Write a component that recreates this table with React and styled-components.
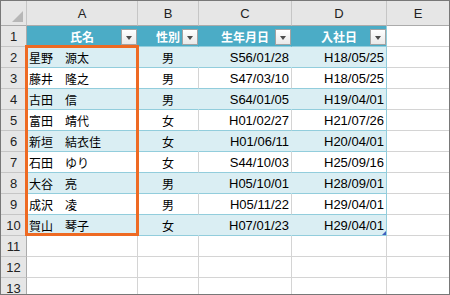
import React from "react";
import styled, { createGlobalStyle } from "styled-components";

const Global = createGlobalStyle`
  html, body { margin: 0; padding: 0; background: #fff; }
  body { font-family: "Liberation Sans", "Noto Sans CJK JP", sans-serif; }
`;

const Sheet = styled.div`
  position: relative;
  box-sizing: border-box;
  width: 450px;
  height: 295px;
  border: 1px solid #787878;
  overflow: hidden;
  display: grid;
  grid-template-columns: 26px 111px 61px 93px 95px 62px;
  grid-template-rows: 25px;
  grid-auto-rows: 21px;
  background: #fff;
`;

const BaseCell = styled.div`
  box-sizing: border-box;
  position: relative;
  display: flex;
  align-items: center;
  overflow: hidden;
  white-space: nowrap;
  font-size: 13px;
  color: #000;
`;

const Corner = styled(BaseCell)`
  background: #e6e6e6;
  border-right: 1px solid #c6c6c6;
  border-bottom: 1px solid #ababab;
`;

const CornerMark = styled.div`
  position: absolute;
  left: 11px;
  top: 10px;
  width: 0;
  height: 0;
  border-left: 11px solid transparent;
  border-bottom: 11px solid #b7b7b7;
`;

const ColHeader = styled(BaseCell)`
  background: #e6e6e6;
  justify-content: center;
  color: #222;
  border-right: ${(p) => (p.$last ? "none" : "1px solid #c6c6c6")};
  border-bottom: 1px solid #ababab;
`;

const RowHeader = styled(BaseCell)`
  background: #e6e6e6;
  justify-content: center;
  color: #222;
  border-right: 1px solid #ababab;
  border-bottom: 1px solid #c6c6c6;
`;

const TableHead = styled(BaseCell)`
  background: #4bacc6;
  color: #fff;
  font-weight: bold;
  font-size: 12px;
  font-family: "Noto Sans CJK JP", sans-serif;
  justify-content: center;
  border-right: 1px solid ${(p) => (p.$edge ? "#92cddc" : "#4bacc6")};
  border-bottom: 1px solid #92cddc;
`;

const FilterButton = styled.div`
  position: absolute;
  right: 0;
  bottom: 1px;
  box-sizing: border-box;
  width: 16px;
  height: 16px;
  border: 1px solid #a3a3a3;
  background: linear-gradient(#ffffff, #e9e9e9);
  display: flex;
  align-items: center;
  justify-content: center;
  &::after {
    content: "";
    width: 0;
    height: 0;
    border-left: 3.5px solid transparent;
    border-right: 3.5px solid transparent;
    border-top: 4px solid #4c4c4c;
    margin-top: 1px;
  }
`;

const DataCell = styled(BaseCell)`
  background: ${(p) => (p.$band ? "#daeef3" : "#fff")};
  justify-content: ${(p) =>
    p.$align === "right" ? "flex-end" : p.$align === "center" ? "center" : "flex-start"};
  padding: 0 2px 0 2px;
  font-size: ${(p) => (p.$cjk ? "12px" : "13px")};
  font-family: ${(p) =>
    p.$cjk ? '"Noto Sans CJK JP", sans-serif' : '"Liberation Sans", "Noto Sans CJK JP", sans-serif'};
  border-right: 1px solid
    ${(p) => (p.$edge ? "#92cddc" : p.$band ? "#daeef3" : "#d4d4d4")};
  border-bottom: 1px solid #92cddc;
`;

const EmptyCell = styled(BaseCell)`
  background: #fff;
  border-right: ${(p) => (p.$last ? "none" : "1px solid #d4d4d4")};
  border-bottom: 1px solid #d4d4d4;
`;

const ResizeHandle = styled.div`
  position: absolute;
  right: 0;
  bottom: 0;
  width: 0;
  height: 0;
  border-left: 4px solid transparent;
  border-bottom: 4px solid #3f5fbf;
`;

const Selection = styled.div`
  position: absolute;
  left: 24px;
  top: 44px;
  width: 114px;
  height: 191px;
  box-sizing: border-box;
  border: 3px solid #ee6a23;
  pointer-events: none;
`;

const headers = ["氏名", "性別", "生年月日", "入社日"];

const rows = [
  ["星野　源太", "男", "S56/01/28", "H18/05/25"],
  ["藤井　隆之", "男", "S47/03/10", "H18/05/25"],
  ["古田　信", "男", "S64/01/05", "H19/04/01"],
  ["富田　靖代", "女", "H01/02/27", "H21/07/26"],
  ["新垣　結衣佳", "女", "H01/06/11", "H20/04/01"],
  ["石田　ゆり", "女", "S44/10/03", "H25/09/16"],
  ["大谷　亮", "男", "H05/10/01", "H28/09/01"],
  ["成沢　凌", "男", "H05/11/22", "H29/04/01"],
  ["賀山　琴子", "女", "H07/01/23", "H29/04/01"],
];

const letters = ["A", "B", "C", "D", "E"];

export default function App() {
  return (
    <>
      <Global />
      <Sheet>
        <Corner>
          <CornerMark />
        </Corner>
        {letters.map((l, i) => (
          <ColHeader key={l} $last={i === letters.length - 1}>
            {l}
          </ColHeader>
        ))}

        <RowHeader>1</RowHeader>
        {headers.map((h, i) => (
          <TableHead key={h} $edge={i === headers.length - 1}>
            {h}
            <FilterButton />
          </TableHead>
        ))}
        <EmptyCell $last />

        {rows.map((r, ri) => {
          const band = ri % 2 === 0;
          const isLast = ri === rows.length - 1;
          return (
            <React.Fragment key={ri}>
              <RowHeader>{ri + 2}</RowHeader>
              <DataCell $band={band} $cjk>
                {r[0]}
              </DataCell>
              <DataCell $band={band} $cjk $align="center">
                {r[1]}
              </DataCell>
              <DataCell $band={band} $align="right">
                {r[2]}
              </DataCell>
              <DataCell $band={band} $align="right" $edge>
                {r[3]}
                {isLast && <ResizeHandle />}
              </DataCell>
              <EmptyCell $last />
            </React.Fragment>
          );
        })}

        {[11, 12, 13].map((n) => (
          <React.Fragment key={n}>
            <RowHeader>{n}</RowHeader>
            <EmptyCell />
            <EmptyCell />
            <EmptyCell />
            <EmptyCell />
            <EmptyCell $last />
          </React.Fragment>
        ))}

        <Selection />
      </Sheet>
    </>
  );
}
